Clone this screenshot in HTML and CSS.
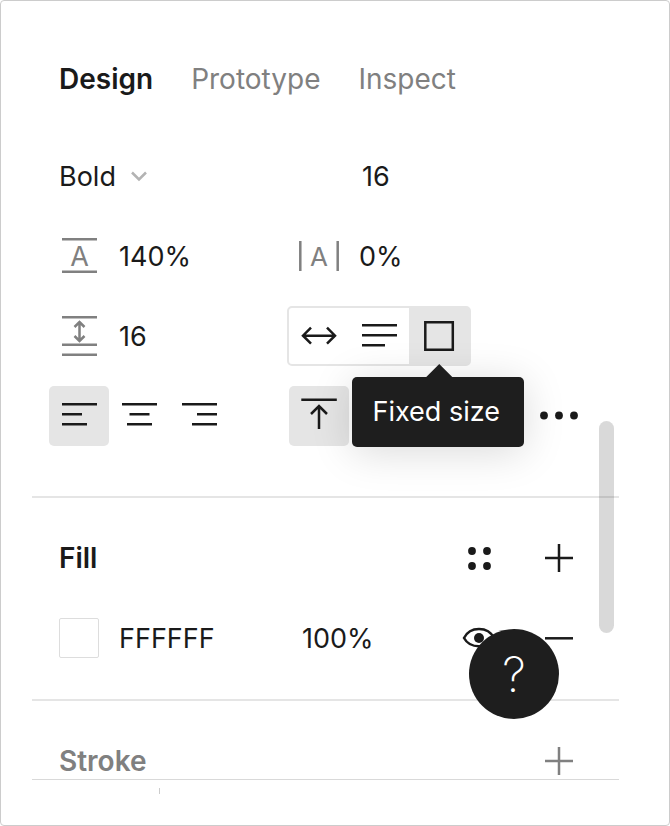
FILE: index.html
```html
<!DOCTYPE html>
<html lang="en">
<head>
  <meta charset="UTF-8">
  <meta name="viewport" content="width=device-width, initial-scale=1.0">
  <title>Design panel</title>
  <link rel="stylesheet" href="styles.css">
</head>
<body>
  <main class="frame">
    <div class="panel">
      <nav class="tabs">
        <button type="button" class="tab active">Design</button>
        <button type="button" class="tab">Prototype</button>
        <button type="button" class="tab">Inspect</button>
      </nav>

      <!-- Text -->
      <section class="section text-section">
        <div class="row">
          <select class="weight" aria-label="Font weight">
            <option>Bold</option>
          </select>
          <svg class="icon chevron" viewBox="0 0 60 60"><path d="M23 26.500l7 7 7-7"/></svg>
          <input class="field right inset" type="text" value="16" aria-label="Font size">
        </div>

        <div class="row">
          <label class="icon-label" for="line-height">
            <svg class="icon muted" viewBox="0 0 60 60"><path d="M13 13.300h35M13 45.700h35"/><text x="30.500" y="40" font-size="27">A</text></svg>
          </label>
          <input class="field" id="line-height" type="text" value="140%" aria-label="Line height">
          <label class="icon-label second" for="letter-spacing">
            <svg class="icon muted" viewBox="0 0 60 60"><path d="M11.300 15v30M48.700 15v30"/><text x="30" y="40" font-size="26">A</text></svg>
          </label>
          <input class="field right" id="letter-spacing" type="text" value="0%" aria-label="Letter spacing">
        </div>

        <div class="row">
          <label class="icon-label" for="paragraph">
            <svg class="icon muted" viewBox="0 0 60 60"><path d="M13 11.300h35M13 38.700h35M13 48.700h35M30.500 16v19M25.500 21l5-5 5 5M25.500 30l5 5 5-5"/></svg>
          </label>
          <input class="field" id="paragraph" type="text" value="16" aria-label="Paragraph spacing">
          <div class="segmented">
            <button type="button" class="segment" aria-label="Auto width">
              <svg class="icon" viewBox="0 0 60 60"><path d="M14 29.700h32M22 21.700l-8 8 8 8M38 21.700l8 8-8 8"/></svg>
            </button>
            <button type="button" class="segment" aria-label="Auto height">
              <svg class="icon" viewBox="0 0 60 60"><path d="M13 19.300h35M13 29.300h35M13 39.300h23"/></svg>
            </button>
            <button type="button" class="segment selected" aria-describedby="size-tip" aria-label="Fixed size">
              <svg class="icon" viewBox="0 0 60 60"><path d="M16.300 16.300h27.500v27.500h-27.500z"/></svg>
            </button>
            <div class="tooltip" id="size-tip" role="tooltip">Fixed size</div>
          </div>
        </div>

        <div class="row">
          <button type="button" class="icon-btn selected" aria-label="Align left">
            <svg class="icon" viewBox="0 0 60 60"><path d="M13 18.300h35M13 28.300h20M13 38.300h25"/></svg>
          </button>
          <button type="button" class="icon-btn" aria-label="Align center">
            <svg class="icon" viewBox="0 0 60 60"><path d="M13 18.300h35M20.500 28.300h20M18 38.300h25"/></svg>
          </button>
          <button type="button" class="icon-btn" aria-label="Align right">
            <svg class="icon" viewBox="0 0 60 60"><path d="M13 18.300h35M28 28.300h20M23 38.300h25"/></svg>
          </button>
          <button type="button" class="icon-btn second selected" aria-label="Align top">
            <svg class="icon" viewBox="0 0 60 60"><path d="M12.300 13.700h35.500M30 20v23M22 28l8-8 8 8"/></svg>
          </button>
          <button type="button" class="icon-btn last" aria-label="Type details">
            <svg class="icon solid" viewBox="0 0 60 60"><circle cx="15" cy="29.500" r="3.900"/><circle cx="30" cy="29.500" r="3.900"/><circle cx="45" cy="29.500" r="3.900"/></svg>
          </button>
        </div>
      </section>

      <!-- Fill -->
      <section class="section">
        <div class="row">
          <h2 class="title">Fill</h2>
          <div class="actions">
            <button type="button" class="icon-btn" aria-label="Styles">
              <svg class="icon solid" viewBox="0 0 60 60"><circle cx="23" cy="23" r="3.900"/><circle cx="38" cy="23" r="3.900"/><circle cx="23" cy="38" r="3.900"/><circle cx="38" cy="38" r="3.900"/></svg>
            </button>
            <button type="button" class="icon-btn" aria-label="Add fill">
              <svg class="icon" viewBox="0 0 60 60"><path d="M16 30h28M30 16v28"/></svg>
            </button>
          </div>
        </div>
        <div class="row">
          <button type="button" class="swatch" aria-label="Fill color"></button>
          <input class="field" type="text" value="FFFFFF" aria-label="Hex color">
          <input class="field opacity inset" type="text" value="100%" aria-label="Opacity">
          <div class="actions">
            <button type="button" class="icon-btn" aria-label="Toggle visibility">
              <svg class="icon" viewBox="0 0 60 60"><path d="M15 30C21 18 39 18 45 30 39 41 21 41 15 30z"/><circle class="pupil" cx="30" cy="30" r="5"/></svg>
            </button>
            <button type="button" class="icon-btn" aria-label="Remove fill">
              <svg class="icon" viewBox="0 0 60 60"><path d="M16 30.300h28"/></svg>
            </button>
          </div>
        </div>
      </section>

      <!-- Stroke, cut off by the end of the panel -->
      <section class="section stroke-section">
        <div class="row">
          <h2 class="title">Stroke</h2>
          <div class="actions">
            <button type="button" class="icon-btn" aria-label="Add stroke">
              <svg class="icon muted" viewBox="0 0 60 60"><path d="M16 30h28M30 16v28"/></svg>
            </button>
          </div>
        </div>
      </section>

      <div class="scroll-thumb"></div>
      <button type="button" class="help" aria-label="Help">?</button>
    </div>
    <div class="tick"></div>
  </main>
</body>
</html>
```

FILE: styles.css
```css
* {
  box-sizing: border-box;
}
body {
  margin: 0;
  background: #fff;
  color: #1a1a1a;
  font-family: Inter, "Liberation Sans", sans-serif;
  font-size: 27px;
}
button, input, select {
  margin: 0;
  padding: 0;
  border: none;
  background: none;
  color: inherit;
  font: inherit;
}
button {
  cursor: pointer;
}
.frame {
  min-height: 100vh;
  padding: 39px 50px 30px 31px;
  border: 1px solid #ccc;
  border-radius: 4px;
}
.panel {
  position: relative;
  border-bottom: 1px solid #d9d9d9;
}

/* Tabs */
.tabs {
  display: flex;
  gap: 38px;
  height: 78px;
  padding-left: 27px;
  font-size: 28px;
}
.tab {
  color: #808080;
}
.tab.active {
  color: #1a1a1a;
  font-weight: 600;
}

/* Rows share nine equal columns */
.section {
  padding: 20px 30px 21px 17px;
  border-bottom: 2px solid #e5e5e5;
}
.text-section {
  padding-top: 18px;
  padding-bottom: 40px;
}
.row {
  display: grid;
  grid-template-columns: repeat(9, minmax(0, 1fr));
  grid-template-rows: 80px;
  align-items: center;
}
.title {
  grid-column: 1 / 5;
  grid-row: 1;
  margin: 0;
  padding-left: 10px;
  font-size: 28px;
  font-weight: 600;
}
.weight {
  grid-column: 1 / 4;
  grid-row: 1;
  padding-left: 10px;
  appearance: none;
}
.field {
  grid-column: 2 / 5;
  grid-row: 1;
  width: 100%;
  padding-left: 10px;
}
.field.right {
  grid-column: 6 / 9;
}
.field.opacity {
  grid-column: 5 / 7;
}
.field.inset {
  padding-left: 13px;
}
.second {
  grid-column: 5;
}
.last {
  grid-column: 9;
}
.actions {
  display: flex;
  grid-column: 7 / 10;
  grid-row: 1;
  justify-content: flex-end;
  gap: 20px;
}

/* Icons */
.icon {
  display: block;
  width: 60px;
  height: 60px;
  fill: none;
  stroke: #1a1a1a;
  stroke-width: 2.5;
}
.icon text {
  fill: #808080;
  stroke: none;
  text-anchor: middle;
}
.icon.muted {
  stroke: #808080;
}
.icon.solid, .icon .pupil {
  fill: #1a1a1a;
  stroke: none;
}
.icon.chevron {
  grid-column: 2;
  grid-row: 1;
  stroke: #b3b3b3;
  pointer-events: none;
}
.icon-btn {
  height: 60px;
  border-radius: 5px;
}
.selected {
  background: #e5e5e5;
}
.swatch {
  width: 40px;
  height: 40px;
  margin-left: 10px;
  border: 1px solid #ddd;
  border-radius: 2px;
}

/* Resizing control */
.segmented {
  position: relative;
  display: grid;
  grid-column: 5 / 8;
  grid-template-columns: repeat(3, 1fr);
  height: 60px;
  margin: 0 -2px;
  border: 2px solid #e5e5e5;
  border-radius: 5px;
}
.segment {
  display: flex;
  align-items: center;
  justify-content: center;
  height: 56px;
}
.tooltip {
  position: absolute;
  top: 69px;
  right: -55px;
  z-index: 2;
  padding: 0 24px 0 20px;
  border-radius: 5px;
  background: #1e1e1e;
  box-shadow: 0 5px 42px rgba(0, 0, 0, 0.15);
  color: #fff;
  line-height: 70px;
  white-space: nowrap;
}
.tooltip::before {
  content: "";
  position: absolute;
  top: -13px;
  left: 50%;
  width: 28px;
  height: 14px;
  margin-left: -13px;
  background: #1e1e1e;
  clip-path: polygon(50% 0, 100% 100%, 0 100%);
}

.stroke-section {
  max-height: 78px;
  border: none;
  overflow: hidden;
  color: #808080;
}
.scroll-thumb {
  position: absolute;
  top: 381px;
  right: 5px;
  width: 15px;
  height: 212px;
  border-radius: 8px;
  background: rgba(0, 0, 0, 0.15);
}
.help {
  position: absolute;
  right: 60px;
  bottom: 60px;
  width: 90px;
  height: 90px;
  border-radius: 50%;
  background: #1e1e1e;
  color: #fff;
  font-size: 48px;
  font-weight: 200;
}
.tick {
  width: 1px;
  height: 6px;
  margin: 8px 0 0 127px;
  background: #ccc;
}
```
